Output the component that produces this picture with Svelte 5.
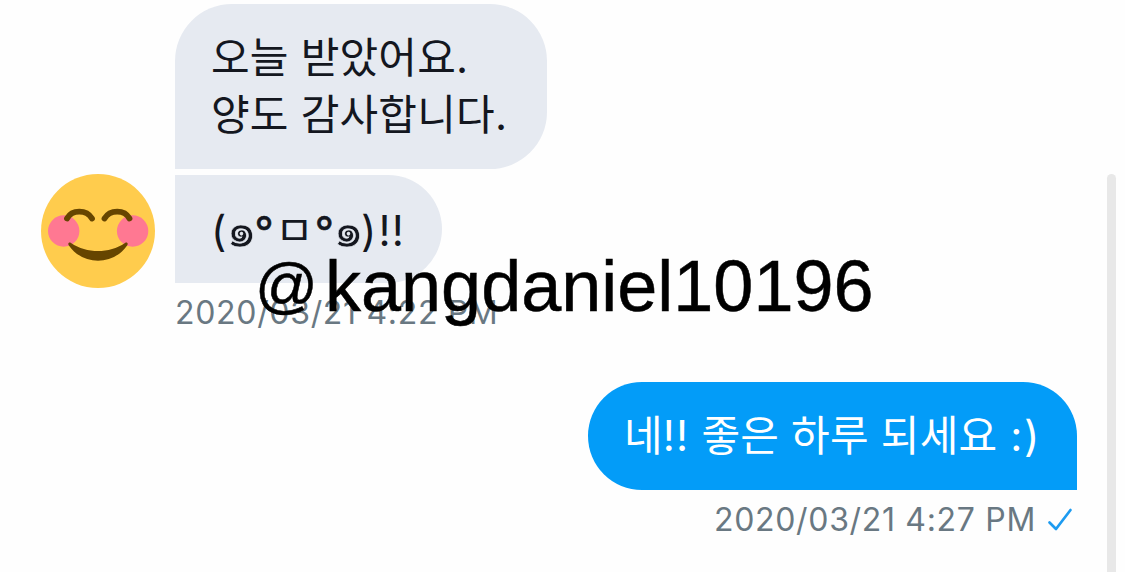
<script>
    const received = [
        { id: 1, lines: ["오늘 받았어요.", "양도 감사합니다."] },
    ];
    const kaomoji = [
        { text: "(", kind: "paren" },
        { text: "๑", kind: "cheek" },
        { text: "°", kind: "eye" },
        { text: "ㅁ", kind: "mouth" },
        { text: "°", kind: "eye" },
        { text: "๑", kind: "cheek" },
        { text: ")", kind: "paren" },
        { text: "!!", kind: "bang" },
    ];
    const receivedAt = "2020/03/21 4:22 PM";
    const sentAt = "2020/03/21 4:27 PM";
    const handle = "kangdaniel10196";
</script>

<div class="screen">
    <main class="chat">
        <section class="incoming">
            <svg class="avatar" viewBox="0 0 114 114">
                <circle cx="57" cy="57" r="57" fill="#ffcc4d" />
                <circle cx="22.7" cy="57" r="15.7" fill="#ff7892" />
                <circle cx="91.6" cy="57" r="15.7" fill="#ff7892" />
                <g fill="none" stroke="#664500" stroke-width="5.8" stroke-linecap="round">
                    <path d="M26 44.5C31 35.3 45.5 35.3 51 44.5" />
                    <path d="M63.5 44.5C69 35.3 83.5 35.3 88.5 44.5" />
                </g>
                <path
                    d="M30 69C46 79.8 68 79.8 84 69C86 67.8 87.4 69.3 86.3 71.2C72 92 42 92 27.7 71.2C26.6 69.3 28 67.8 30 69Z"
                    fill="#664500"
                />
            </svg>

            <div class="messages">
                {#each received as message (message.id)}
                    <div class="bubble first">
                        {#each message.lines as line}
                            <p>{line}</p>
                        {/each}
                    </div>
                {/each}
                <div class="bubble second">
                    <p class="kaomoji">{#each kaomoji as part}<span class={part.kind}>{part.text}</span>{/each}</p>
                </div>
                <div class="time">{receivedAt}</div>
            </div>
        </section>

        <section class="outgoing">
            <div class="bubble sent"><p>네<span class="marks">!!</span> 좋은 하루 되세요 <span class="smile">:)</span></p></div>
            <div class="status">
                <span class="time">{sentAt}</span>
                <svg class="check" viewBox="0 0 26 24">
                    <path d="M2.5 14.5L9 21L23.5 2" fill="none" stroke="#1d9bf0" stroke-width="2.7" stroke-linecap="round" stroke-linejoin="round" />
                </svg>
            </div>
        </section>
    </main>

    <div class="scrollbar"></div>
    <div class="watermark"><span class="at">@</span>{handle}</div>
</div>

<style>
    :global(body) {
        margin: 0;
        background: #fefefe;
    }

    .screen {
        position: relative;
        display: flex;
        width: 1125px;
        height: 572px;
        overflow: hidden;
        font-family: Inter, "Noto Sans CJK KR", sans-serif;
    }

    .chat {
        display: flex;
        flex-direction: column;
        width: 1077px;
        padding-top: 4px;
        box-sizing: border-box;
    }

    .incoming {
        display: flex;
        align-items: flex-start;
        gap: 20px;
        height: 378px;
        padding-left: 41px;
    }

    .avatar {
        width: 114px;
        height: 114px;
        margin-top: 170px;
    }

    .messages {
        display: flex;
        flex-direction: column;
        align-items: flex-start;
    }

    .bubble {
        box-sizing: border-box;
        background: #e6eaf1;
        color: #14171f;
        font-size: 42px;
        line-height: 57px;
        letter-spacing: 0.2px;
        white-space: pre;
    }

    .bubble p {
        height: 57px;
        margin: 0;
    }

    .first {
        width: 372px;
        height: 165px;
        padding: 25px 36px 0;
        border-radius: 57px 57px 57px 0;
    }

    .second {
        width: 267px;
        height: 108px;
        margin-top: 6px;
        padding: 27px 36px 0;
        border-radius: 0 54px 54px 0;
    }

    .kaomoji {
        display: flex;
    }

    /* thin the heavy fallback glyph to the weight of its neighbours */
    .cheek {
        width: 27px;
        margin: -1px 0 0 -1px;
        padding-right: 1px;
        font-size: 49px;
        letter-spacing: 0;
        -webkit-text-stroke: 0.6px #e6eaf1;
    }

    .eye {
        margin-left: 1px;
        padding-top: 1px;
        -webkit-text-stroke: 0.6px #14171f;
    }

    .mouth {
        margin-left: 1px;
    }

    .bang {
        margin-left: 2px;
        letter-spacing: 1px;
    }

    .time {
        color: #697882;
        font-size: 32px;
        line-height: 40px;
        letter-spacing: 0.68px;
        white-space: pre;
    }

    .messages .time {
        margin-top: 10px;
    }

    .outgoing {
        display: flex;
        flex-direction: column;
        align-items: flex-end;
    }

    .sent {
        width: 489px;
        height: 108px;
        padding: 25px 36px 0;
        border-radius: 54px 54px 0 54px;
        background: #039cf8;
        color: #fff;
    }

    .marks {
        letter-spacing: 1.2px;
    }

    .smile {
        margin-left: 1px;
        letter-spacing: 1.5px;
    }

    .status {
        display: flex;
        align-items: center;
        gap: 11px;
        margin-top: 10px;
        padding-right: 4px;
    }

    .check {
        width: 26px;
        height: 24px;
    }

    .scrollbar {
        width: 9px;
        margin: 174px 0 0 30px;
        border-radius: 5px 5px 0 0;
        background: #e8e8e8;
    }

    /* handle stamped across the conversation */
    .watermark {
        position: absolute;
        top: 246px;
        left: 255px;
        color: #000;
        font-family: "Liberation Sans", Arial, sans-serif;
        font-size: 72px;
        line-height: 80px;
        white-space: nowrap;
        -webkit-text-stroke: 0.5px #000;
    }

    .at {
        display: inline-block;
        width: 70px;
        font-size: 62px;
        line-height: 1px;
        vertical-align: 5px;
    }
</style>
